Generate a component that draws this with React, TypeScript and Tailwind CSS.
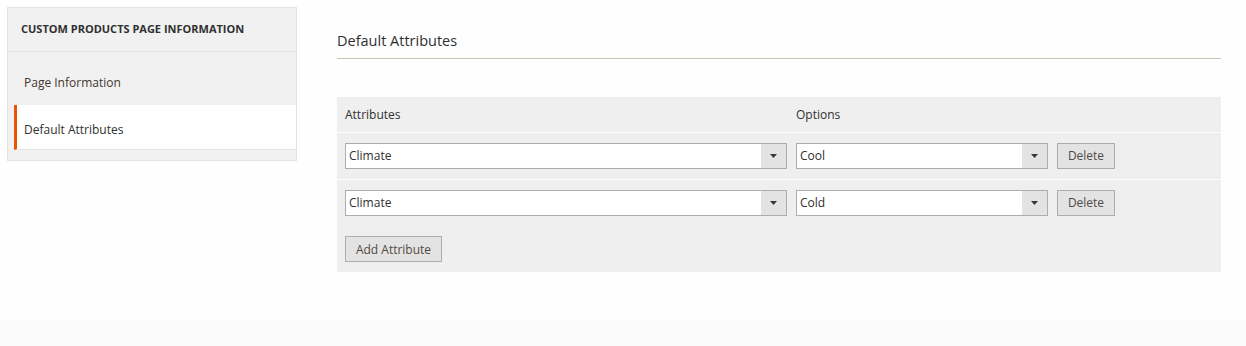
import { useState } from "react";

type Row = { id: number; attribute: string; option: string };

const font = { fontFamily: '"Open Sans", "Noto Sans", Arial, sans-serif' };

function Select({ value, width }: { value: string; width: string }) {
  return (
    <div className={`flex h-[26px] items-stretch border border-[#adadad] bg-white ${width}`}>
      <span className="flex flex-1 items-center pl-[3px] pt-[1px] text-[12px] text-[#303030]">{value}</span>
      <span className="flex w-[25px] items-center justify-center bg-[#e3e3e3]">
        <svg width="7" height="4" viewBox="0 0 7 4">
          <path d="M0 0h7L3.5 4z" fill="#41362f" />
        </svg>
      </span>
    </div>
  );
}

function Button({ children, className = "" }: { children: string; className?: string }) {
  return (
    <button
      className={`h-[26px] border border-[#adadad] bg-[#e3e3e3] pt-[1px] text-[12px] text-[#514943] ${className}`}
    >
      {children}
    </button>
  );
}

export default function App() {
  const [rows] = useState<Row[]>([
    { id: 1, attribute: "Climate", option: "Cool" },
    { id: 2, attribute: "Climate", option: "Cold" },
  ]);

  return (
    <div className="flex min-h-[346px] flex-col bg-[#fefefe]" style={font}>
      <div className="flex flex-1 gap-[40px] pl-[7px] pr-[25px] pt-[7px]">
        {/* side nav */}
        <div className="w-[290px] self-start border border-[#e3e3e3] bg-[#f1f1f1] pb-[10px]">
          <div className="flex h-[44px] items-center border-b border-[#e3e3e3] px-[13px] text-[11px] font-bold uppercase text-[#303030]">
            Custom Products Page Information
          </div>
          <div className="flex h-[53px] items-center px-[16px] pt-[9px] text-[12px] text-[#41362f]">
            Page Information
          </div>
          <div className="ml-[6px] flex h-[45px] items-center border-b border-[#e3e3e3] border-l-[3px] border-l-[#eb5202] bg-white pl-[7px] pt-[5px] text-[12px] text-[#303030]">
            Default Attributes
          </div>
        </div>

        {/* main */}
        <div className="flex-1 pt-[23px]">
          <div className="border-b border-[#cac3b4] pb-[6px] text-[14.5px] text-[#303030]">Default Attributes</div>

          <div className="mt-[38px] bg-[#efefef]">
            <div className="flex h-[35px] items-center gap-[9px] px-[8px] pt-[2px] text-[12px] text-[#303030]">
              <span className="w-[442px]">Attributes</span>
              <span>Options</span>
            </div>
            {rows.map((r) => (
              <div key={r.id} className="flex items-center gap-[9px] border-t border-[#fefefe] px-[8px] py-[10px]">
                <Select value={r.attribute} width="w-[442px]" />
                <Select value={r.option} width="w-[252px]" />
                <Button className="w-[58px]">Delete</Button>
              </div>
            ))}
            <div className="px-[8px] pb-[10px] pt-[10px]">
              <Button className="w-[97px]">Add Attribute</Button>
            </div>
          </div>
        </div>
      </div>
      <div className="h-[27px] bg-[#fbfbfb]" />
    </div>
  );
}
